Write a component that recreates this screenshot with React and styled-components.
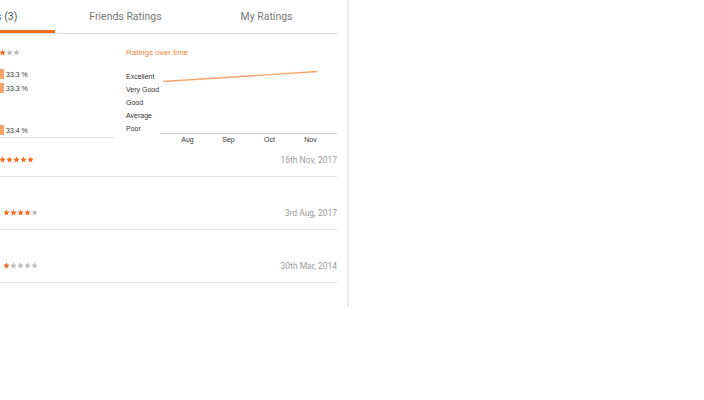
import React from 'react';
import styled, { createGlobalStyle } from 'styled-components';

const GlobalStyle = createGlobalStyle`
  body {
    margin: 0;
    background: #fff;
    font-family: Roboto, "Liberation Sans", Arial, sans-serif;
  }
`;

const ORANGE = '#f26c1f';

const distribution = [
  { label: '5', value: 33.3 },
  { label: '4', value: 33.3 },
  { label: '3', value: 0 },
  { label: '2', value: 0 },
  { label: '1', value: 33.4 },
];

const reviews = [
  { name: 'Rahul Mehta', rating: 5, date: '16th Nov, 2017', nameWidth: 85, first: true },
  { name: 'Priya Shah', rating: 4, date: '3rd Aug, 2017', nameWidth: 89 },
  { name: 'Anil Kumar', rating: 1, date: '30th Mar, 2014', nameWidth: 89 },
];

const levels = ['Excellent', 'Very Good', 'Good', 'Average', 'Poor'];
const months = ['Aug', 'Sep', 'Oct', 'Nov'];

function Star({ on, size = 7 }) {
  return (
    <svg width={size} height={size} viewBox="0 0 24 24">
      <path
        d="M12 1.5l3.1 7.1 7.7.7-5.8 5.1 1.7 7.6L12 18l-6.7 4 1.7-7.6-5.8-5.1 7.7-.7z"
        fill={on ? ORANGE : '#bdbdbd'}
      />
    </svg>
  );
}

function Stars({ rating }) {
  return (
    <StarRow>
      {[1, 2, 3, 4, 5].map((n) => (
        <Star key={n} on={n <= rating} />
      ))}
    </StarRow>
  );
}

export default function App() {
  const max = Math.max(...distribution.map((d) => d.value));

  return (
    <>
      <GlobalStyle />
      <Panel>
        <Tabs>
          <Tab $active>All Ratings (3)</Tab>
          <Tab>Friends Ratings</Tab>
          <Tab>My Ratings</Tab>
        </Tabs>

        <Summary>
          <Breakdown>
            <AverageRow>
              <AverageLabel>Average 3.3</AverageLabel>
              <Stars rating={3} />
            </AverageRow>
            {distribution.map((d) => (
              <BarRow key={d.label}>
                <BarLabel>{d.label} ★</BarLabel>
                <BarTrack>
                  {d.value > 0 && <BarFill style={{ width: `${(d.value / max) * 100}%` }} />}
                </BarTrack>
                <Percent>{d.value > 0 ? `${d.value.toFixed(1)} %` : ''}</Percent>
              </BarRow>
            ))}
          </Breakdown>

          <Trend>
            <TrendTitle>Ratings over time</TrendTitle>
            <ChartGrid>
              <Levels>
                {levels.map((l) => (
                  <Level key={l}>{l}</Level>
                ))}
              </Levels>
              <Plot viewBox="0 0 177 65" width="177" height="65">
                <line x1="3" y1="12.5" x2="157" y2="2.5" stroke="#f7a46d" strokeWidth="1.4" />
                <line x1="0" y1="64.5" x2="177" y2="64.5" stroke="#cfcfcf" strokeWidth="1" />
              </Plot>
              <Months>
                {months.map((m) => (
                  <Month key={m}>{m}</Month>
                ))}
              </Months>
            </ChartGrid>
          </Trend>
        </Summary>

        {reviews.map((r) => (
          <Review key={r.date} $first={r.first}>
            <ReviewHead>
              <Reviewer>
                <Name $width={r.nameWidth}>{r.name}</Name>
                <Stars rating={r.rating} />
              </Reviewer>
              <DateText>{r.date}</DateText>
            </ReviewHead>
          </Review>
        ))}
      </Panel>
    </>
  );
}

// panel styles

const Panel = styled.div`
  box-sizing: border-box;
  margin-left: -86px;
  width: 435px;
  height: 307px;
  padding-right: 10px;
  border-right: 2px solid #e9e9e9;
`;

const Tabs = styled.div`
  display: flex;
  height: 34px;
  box-sizing: border-box;
  border-bottom: 1px solid #dcdcdc;
`;

const Tab = styled.div`
  flex: 1;
  display: flex;
  align-items: center;
  justify-content: center;
  font-size: 10.5px;
  color: ${(p) => (p.$active ? '#555' : '#777')};
  box-shadow: ${(p) => (p.$active ? `inset 0 -3px 0 ${ORANGE}` : 'none')};
  white-space: nowrap;
`;

const Summary = styled.div`
  display: flex;
  height: 111px;
`;

const Breakdown = styled.div`
  box-sizing: border-box;
  width: 201px;
  height: 104px;
  padding-top: 13px;
  border-bottom: 1px solid #e6e6e6;
`;

const AverageRow = styled.div`
  display: flex;
  align-items: center;
  height: 10px;
  margin-bottom: 10px;
`;

const AverageLabel = styled.div`
  width: 71px;
  font-size: 8px;
  color: #555;
  white-space: nowrap;
  overflow: hidden;
`;

const StarRow = styled.div`
  display: flex;
  svg {
    display: block;
  }
`;

const BarRow = styled.div`
  display: flex;
  align-items: center;
  height: 14px;
`;

const BarLabel = styled.div`
  width: 46px;
  font-size: 7px;
  color: #555;
`;

const BarTrack = styled.div`
  width: 44px;
  height: 10px;
  display: flex;
  justify-content: flex-end;
`;

const BarFill = styled.div`
  height: 100%;
  background: #f6a36b;
`;

const Percent = styled.div`
  margin-left: 2px;
  font-family: "Liberation Sans", Arial, sans-serif;
  font-size: 7px;
  color: #333;
`;

const Trend = styled.div`
  margin-left: 3px;
  padding: 14px 0 0 8px;
  flex: 1;
`;

const TrendTitle = styled.div`
  font-family: "Liberation Sans", Arial, sans-serif;
  font-size: 8px;
  line-height: 10px;
  color: #f0843c;
  margin-bottom: 11px;
`;

const ChartGrid = styled.div`
  display: grid;
  grid-template-columns: 34px 177px;
  grid-template-rows: 65px 10px;
`;

const Levels = styled.div`
  display: flex;
  flex-direction: column;
  padding-top: 1px;
`;

const Level = styled.div`
  height: 13px;
  line-height: 13px;
  font-family: "Liberation Sans", Arial, sans-serif;
  font-size: 7px;
  color: #333;
  white-space: nowrap;
`;

const Plot = styled.svg`
  display: block;
  overflow: visible;
`;

const Months = styled.div`
  grid-column: 2;
  display: grid;
  grid-template-columns: repeat(4, 1fr);
  padding: 0 6px 0 7px;
`;

const Month = styled.div`
  text-align: center;
  font-family: "Liberation Sans", Arial, sans-serif;
  font-size: 7px;
  line-height: 12px;
  color: #333;
`;

const Review = styled.div`
  padding-top: ${(p) => (p.$first ? 9 : 30)}px;
  padding-bottom: 12px;
  border-bottom: 1px solid #e2e2e2;
`;

const ReviewHead = styled.div`
  display: flex;
  align-items: center;
  justify-content: space-between;
  height: 10px;
`;

const Reviewer = styled.div`
  display: flex;
  align-items: center;
`;

const Name = styled.div`
  width: ${(p) => p.$width}px;
  font-size: 9px;
  color: #444;
  white-space: nowrap;
  overflow: hidden;
`;

const DateText = styled.div`
  margin-top: 2px;
  font-size: 8.5px;
  color: #9a9a9a;
`;
